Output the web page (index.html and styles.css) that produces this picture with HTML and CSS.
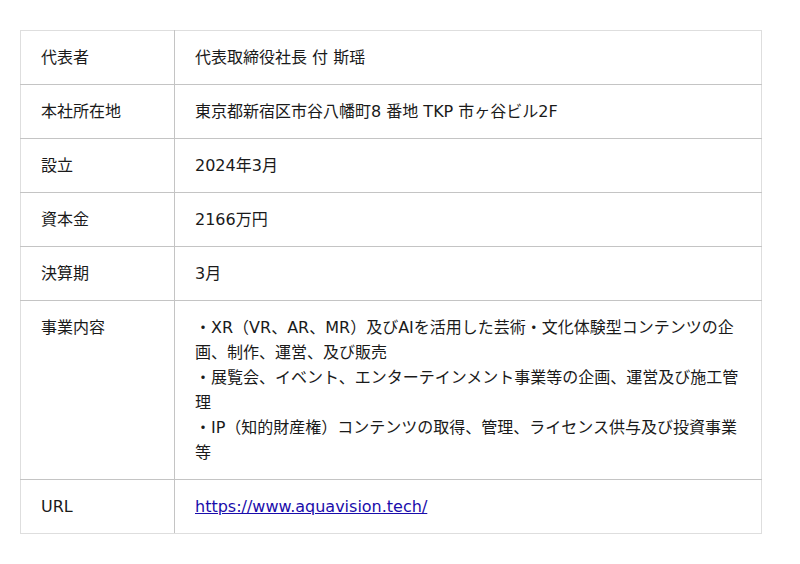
FILE: index.html
```html
<!DOCTYPE html>
<html lang="ja">
<head>
<meta charset="utf-8">
<link rel="stylesheet" href="styles.css">
</head>
<body>
<table class="info">
  <tr><th>代表者</th><td>代表取締役社長 付 斯瑶</td></tr>
  <tr><th>本社所在地</th><td>東京都新宿区市谷八幡町8 番地 TKP 市ヶ谷ビル2F</td></tr>
  <tr><th>設立</th><td>2024年3月</td></tr>
  <tr><th>資本金</th><td>2166万円</td></tr>
  <tr><th>決算期</th><td>3月</td></tr>
  <tr><th>事業内容</th><td>・XR（VR、AR、MR）及びAIを活用した芸術・文化体験型コンテンツの企画、制作、運営、及び販売<br>・展覧会、イベント、エンターテインメント事業等の企画、運営及び施工管理<br>・IP（知的財産権）コンテンツの取得、管理、ライセンス供与及び投資事業等</td></tr>
  <tr><th>URL</th><td><a href="https://www.aquavision.tech/">https://www.aquavision.tech/</a></td></tr>
</table>
</body>
</html>
```
FILE: styles.css
```css
html, body {
  margin: 0;
  background: #fff;
}
body {
  padding: 30px 20px;
  font-family: "DejaVu Sans", "Noto Sans CJK JP", sans-serif;
  font-size: 16px;
  color: #1a1a1a;
}
.info {
  width: 742px;
  border-collapse: collapse;
  border: 1px solid #dedede;
}
.info th, .info td {
  text-align: left;
  vertical-align: top;
  font-weight: normal;
  padding: 14px 20px;
  line-height: 25px;
  border: 1px solid #c4c4c4;
}
.info tr:first-child th, .info tr:first-child td { border-top-color: #dedede; }
.info tr:last-child th, .info tr:last-child td { border-bottom-color: #dedede; }
.info th { width: 113px; border-left-color: #dedede; }
.info td { border-right-color: #dedede; }
.info a { color: #1a0dab; }
```
